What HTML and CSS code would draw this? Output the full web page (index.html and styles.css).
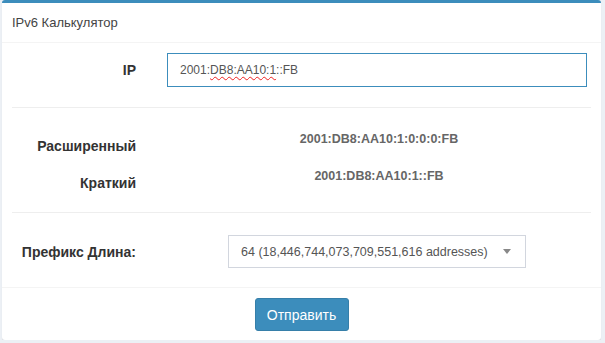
FILE: index.html
```html
<!DOCTYPE html>
<html>
<head>
  <title>IPv6 Калькулятор</title>
  <meta charset="utf-8" />
  <link rel="stylesheet" href="styles.css">
</head>
<body>
<div class="box">
  <div class="box-header">
    <h3 class="box-title">IPv6 Калькулятор</h3>
  </div>
  <div class="box-body">
    <div class="form-row">
      <label class="form-label">IP</label>
      <div class="form-control focused">2001:<span class="misspelled">DB8:AA10:1</span>::FB</div>
    </div>
    <hr />
    <div class="results">
      <div class="result-row">
        <span class="result-label">Расширенный</span>
        <span class="result-value">2001:DB8:AA10:1:0:0:0:FB</span>
      </div>
      <div class="result-row">
        <span class="result-label">Краткий</span>
        <span class="result-value">2001:DB8:AA10:1::FB</span>
      </div>
    </div>
    <hr class="hr-tight" />
    <div class="form-row prefix-row">
      <label class="form-label">Префикс Длина:</label>
      <div class="select">
        <span class="select-text">64 (18,446,744,073,709,551,616 addresses)</span>
        <b class="select-arrow"></b>
      </div>
    </div>
  </div>
  <div class="box-footer">
    <button class="btn" type="button">Отправить</button>
  </div>
</div>
</body>
</html>
```

FILE: styles.css
```css
body {
  margin: 0;
  padding: 0 4px 0 2px;
  background: #ecf0f5;
  font-family: 'Liberation Sans', Arial, sans-serif;
  font-size: 14px;
  color: #333;
}

.box {
  width: 599px;
  background: #fff;
  border-top: 3px solid #3c8dbc;
  border-radius: 3px;
  box-shadow: 0 1px 1px rgba(0,0,0,0.1);
}

.box-header {
  height: 39px;
  padding: 0 10px;
  display: flex;
  align-items: center;
  border-bottom: 1px solid #f4f4f4;
}

.box-title {
  margin: 0;
  font-size: 13px;
  font-weight: normal;
  color: #444;
}

.box-body {
  padding: 10px;
}

hr {
  margin: 20px 0 0;
  border: 0;
  border-top: 1px solid #eee;
}

.form-row {
  display: flex;
  align-items: center;
}

.form-label {
  width: 124px;
  flex: none;
  text-align: right;
  font-weight: bold;
}

.form-control {
  margin-left: 31px;
  width: 420px;
  height: 34px;
  box-sizing: border-box;
  padding: 0 12px;
  display: flex;
  align-items: center;
  border: 1px solid #d2d6de;
  color: #555;
  font-size: 12px;
}

.form-control.focused {
  border-color: #3c8dbc;
}

.misspelled {
  text-decoration: underline wavy #e22;
  text-decoration-thickness: 1px;
  text-underline-offset: 2px;
}

.results {
  margin-top: 20px;
}

.result-row {
  display: flex;
  height: 37px;
}

.result-label {
  width: 124px;
  flex: none;
  padding-top: 8px;
  line-height: 20px;
  text-align: right;
  font-weight: bold;
}

.result-value {
  flex: 1;
  margin-left: 31px;
  padding-top: 1px;
  line-height: 20px;
  text-align: center;
  font-weight: bold;
  font-size: 12.5px;
  color: #666;
}

.hr-tight {
  margin-top: 10px;
}

.prefix-row {
  margin-top: 22px;
  margin-bottom: 9px;
}

.select {
  margin-left: 92px;
  width: 298px;
  height: 33px;
  box-sizing: border-box;
  padding: 0 12px;
  display: flex;
  align-items: center;
  justify-content: space-between;
  border: 1px solid #d2d6de;
  color: #555;
  font-size: 12.5px;
}

.select-arrow {
  border-style: solid;
  border-width: 5px 4px 0 4px;
  border-color: #888 transparent transparent transparent;
  margin-right: 2px;
}

.box-footer {
  padding: 10px 10px 9px;
  border-top: 1px solid #f4f4f4;
  text-align: center;
}

.btn {
  width: 94px;
  height: 33px;
  padding: 0;
  background: #3c8dbc;
  border: 1px solid #367fa9;
  border-radius: 3px;
  color: #fff;
  font-family: 'Liberation Sans', Arial, sans-serif;
  font-size: 14px;
}
```
